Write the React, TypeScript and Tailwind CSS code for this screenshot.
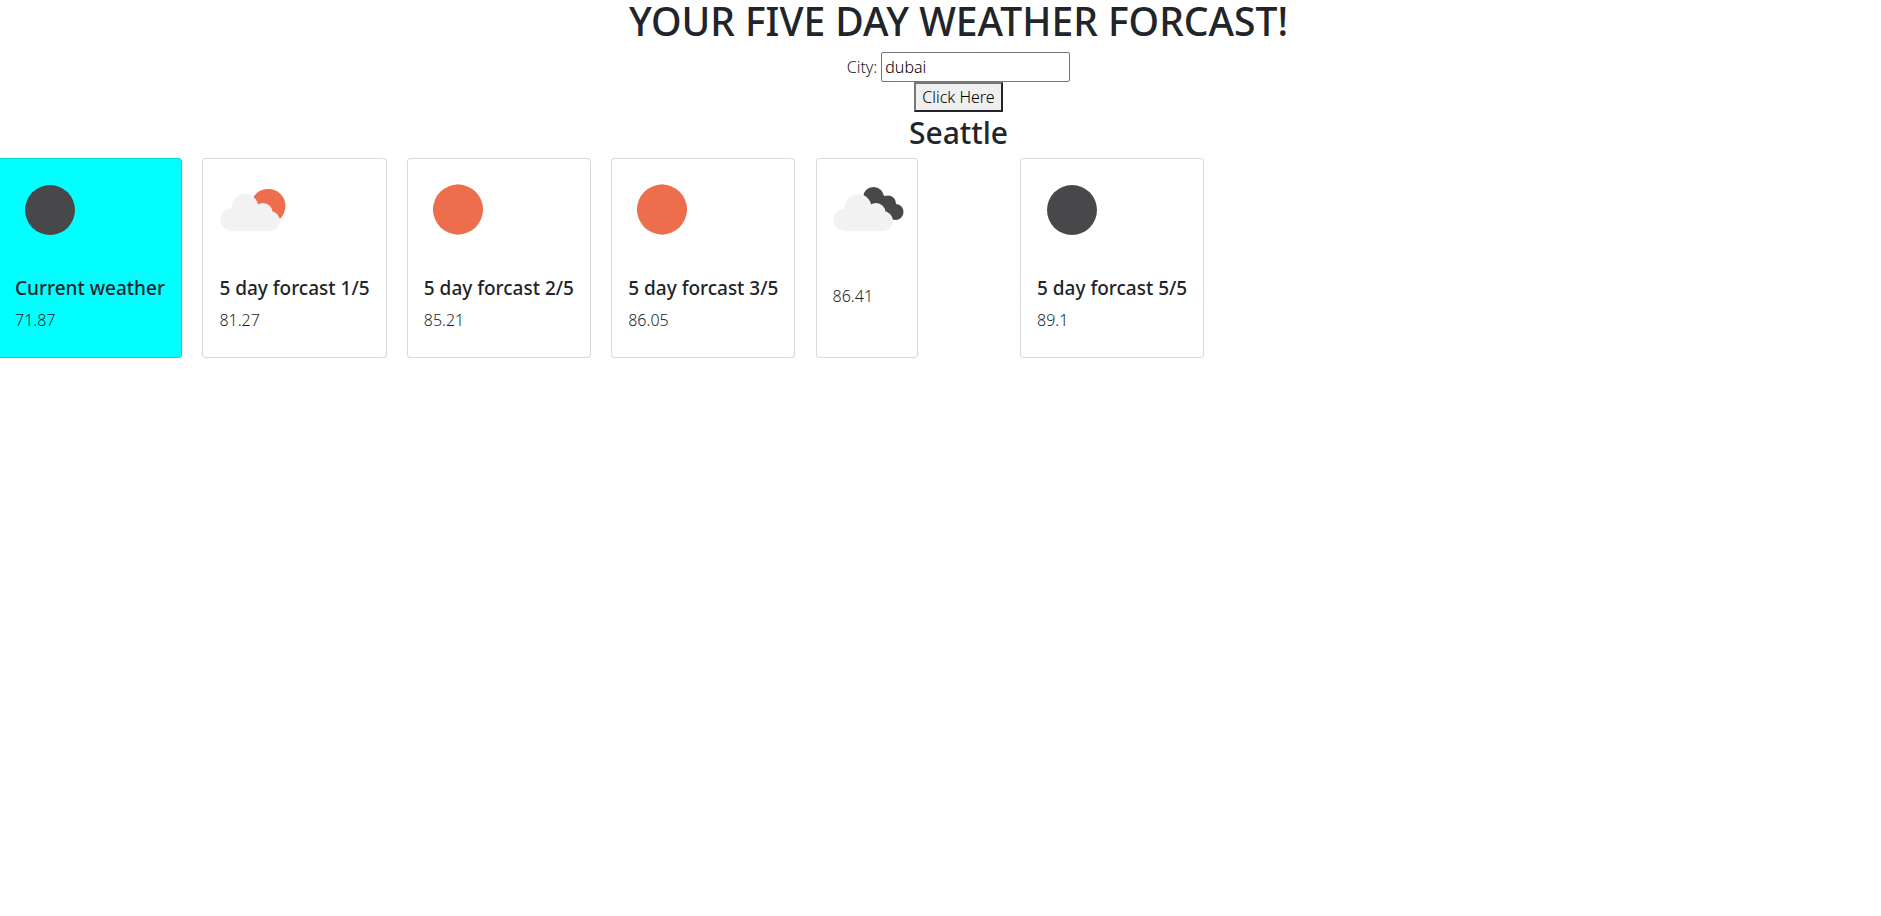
import { useState } from "react";

type Icon = "clear-night" | "clear-day" | "partly-cloudy" | "broken-clouds";

interface Forecast {
  title: string;
  temp: string;
  icon: Icon;
  current?: boolean;
}

const forecasts: Forecast[] = [
  { title: "Current weather", temp: "71.87", icon: "clear-night", current: true },
  { title: "5 day forcast 1/5", temp: "81.27", icon: "partly-cloudy" },
  { title: "5 day forcast 2/5", temp: "85.21", icon: "clear-day" },
  { title: "5 day forcast 3/5", temp: "86.05", icon: "clear-day" },
  { title: "", temp: "86.41", icon: "broken-clouds" },
  { title: "5 day forcast 5/5", temp: "89.1", icon: "clear-night" },
];

function Cloud() {
  return (
    <g fill="#f2f2f2">
      <circle cx="28.5" cy="60.5" r="11" />
      <circle cx="42" cy="48.5" r="13.5" />
      <circle cx="60" cy="53.5" r="9.5" />
      <circle cx="67" cy="62" r="10" />
      <path d="M28 50 H66 V72 H28 Z" />
    </g>
  );
}

function WeatherIcon({ icon }: { icon: Icon }) {
  return (
    <svg viewBox="0 0 100 100" className="block size-[100px]" aria-hidden="true">
      {icon === "clear-night" && <circle cx="51" cy="51" r="25" fill="#48484a" />}
      {icon === "clear-day" && (
        <g fill="#ec6e4c">
          <circle cx="50" cy="50.500" r="25" />
          <rect x="30" y="30.500" width="40" height="40" rx="8" transform="rotate(45 50 50.500)" />
        </g>
      )}
      {icon === "partly-cloudy" && (
        <>
          <path
            fill="#ec6e4c"
            d="M50.500 38 A17 17 0 0 1 65.500 30 A17 17 0 0 1 82.500 47 Q82.500 54 77 60 L72 57 L60 50 L54 46 Z"
          />
          <Cloud />
        </>
      )}
      {icon === "broken-clouds" && (
        <g transform="translate(-1 0)">
          <g fill="#48484a">
            <path d="M48 36 L62 31 L74 42 L84 58 L79 60 L69 57 L54 46 Z" />
            <circle cx="57.500" cy="38.500" r="10.500" />
            <circle cx="72" cy="44.500" r="8" />
            <circle cx="79.500" cy="53" r="8" />
          </g>
          <Cloud />
        </g>
      )}
    </svg>
  );
}

function ForecastCard({ title, temp, icon, current }: Forecast) {
  return (
    <article
      className={`min-h-[200px] w-fit rounded border border-black/15 ${current ? "bg-[#00ffff]" : "bg-white"}`}
    >
      <WeatherIcon icon={icon} />
      <div className="px-4 pt-[17px]">
        {title && <h2 className="text-[19px] leading-6 font-medium whitespace-nowrap">{title}</h2>}
        <p className="mt-2 leading-6">{temp}</p>
      </div>
    </article>
  );
}

export default function App() {
  const [city, setCity] = useState("dubai");

  return (
    <div className="overflow-x-clip bg-white font-['Noto_Sans',sans-serif] text-[16px] leading-6 font-[350] text-[#212529]">
      <header className="flex flex-col items-center pl-9">
        <h1 className="mb-2.5 text-[39px] leading-[42px] font-medium">YOUR FIVE DAY WEATHER FORCAST!</h1>
        <form className="flex flex-col items-center" onSubmit={(e) => e.preventDefault()}>
          <div className="flex items-center gap-1">
            <label htmlFor="city">City:</label>
            <input
              id="city"
              type="text"
              value={city}
              onChange={(e) => setCity(e.target.value)}
              className="h-[30px] w-[189px] rounded-xs border border-[#767676] bg-white px-[3px] text-black outline-none"
            />
          </div>
          <button
            type="submit"
            className="h-[30px] border-2 border-t-[#767676] border-r-[#212529] border-b-[#212529] border-l-[#767676] bg-[#efefef] px-1.5 leading-6 text-black"
          >
            Click Here
          </button>
        </form>
        <h2 className="mb-1 text-[30px] leading-[42px] font-medium">Seattle</h2>
      </header>
      <main className="-ml-0.5 grid w-[65.2%] min-w-[1160px] grid-cols-6">
        {forecasts.map((forecast) => (
          <ForecastCard key={forecast.temp} {...forecast} />
        ))}
      </main>
    </div>
  );
}
